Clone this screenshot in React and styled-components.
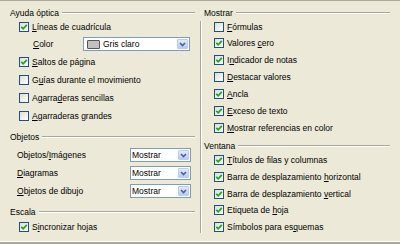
import React from "react";
import styled, { createGlobalStyle } from "styled-components";

const Global = createGlobalStyle`
  body {
    margin: 0;
    background: #ece9d8;
  }
`;

const Window = styled.div`
  width: 400px;
  height: 244px;
  box-sizing: border-box;
  display: flex;
  background: #ece9d8;
  box-shadow: inset 0 1px #aca899, inset 0 -2px #aca899, inset 0 -3px #fff;
  font-family: "Liberation Sans", Arial, sans-serif;
  font-size: 8.5px;
  color: #000;
`;

const Column = styled.div`
  width: ${p => p.$w}px;
  box-sizing: border-box;
  padding: 7px ${p => p.$pr}px 0 ${p => p.$pl}px;
  display: flex;
  flex-direction: column;
`;

const Divider = styled.div`
  margin: 21px 0 11px;
  border-left: 1px solid #aca899;
  border-right: 1px solid #fff;
`;

const Legend = styled.div`
  display: flex;
  align-items: center;
  height: 12px;
  margin-top: ${p => p.$mt || 0}px;
  white-space: nowrap;

  &::after {
    content: "";
    flex: 1;
    margin-left: 3px;
    border-top: 1px solid #aca899;
    border-bottom: 1px solid #fff;
  }
`;

const Row = styled.div`
  display: flex;
  align-items: center;
  height: ${p => p.$h}px;
  padding-left: ${p => p.$indent}px;
  margin-top: ${p => p.$mt || 0}px;
  gap: 3px;
  white-space: nowrap;
`;

const Box = styled.span`
  width: 10px;
  height: 10px;
  box-sizing: border-box;
  border: 1px solid #1c5180;
  background: linear-gradient(135deg, #dcdcd7, #fff);
  display: flex;
  align-items: center;
  justify-content: center;
  flex: none;
`;

const Label = styled.span`
  width: ${p => (p.$w ? `${p.$w}px` : "auto")};
  flex: ${p => (p.$w ? "none" : 1)};
`;

const Select = styled.div`
  width: ${p => p.$w}px;
  height: 14px;
  box-sizing: border-box;
  margin-right: ${p => p.$mr}px;
  padding-left: ${p => p.$pl}px;
  border: 1px solid #7f9db9;
  background: #fff;
  display: flex;
  align-items: center;
  flex: none;
`;

const SelectText = styled.span`
  flex: 1;
`;

const Swatch = styled.span`
  width: 13px;
  height: 9px;
  box-sizing: border-box;
  margin-right: 3px;
  border: 1px solid #555;
  border-radius: 1px;
  background: #c0c0c0;
`;

const DropButton = styled.span`
  width: 11px;
  height: 10px;
  margin-right: 1px;
  box-sizing: border-box;
  border: 1px solid #bccbf2;
  border-radius: 1px;
  background: linear-gradient(#e3ebfd, #b7caf5);
  display: flex;
  align-items: center;
  justify-content: center;
`;

const Key = styled.span`
  text-decoration: underline;
  text-underline-offset: 1px;
`;

function Mnemonic({ text }) {
  const i = text.indexOf("~");
  if (i < 0) return text;
  return (
    <>
      {text.slice(0, i)}
      <Key>{text[i + 1]}</Key>
      {text.slice(i + 2)}
    </>
  );
}

function Check({ checked }) {
  return (
    <Box>
      {checked && (
        <svg width="8" height="8" viewBox="0 0 8 8">
          <path d="M1.3 3.8 L3.2 5.8 L6.8 1.9" fill="none" stroke="#21a121" strokeWidth="1.7" />
        </svg>
      )}
    </Box>
  );
}

function CheckItem({ label, checked, h, indent, mt }) {
  return (
    <Row $h={h} $indent={indent} $mt={mt}>
      <Check checked={checked} />
      <span><Mnemonic text={label} /></span>
    </Row>
  );
}

function Dropdown({ value, w, mr, pl, swatch }) {
  return (
    <Select $w={w} $mr={mr} $pl={pl}>
      {swatch && <Swatch />}
      <SelectText>{value}</SelectText>
      <DropButton>
        <svg width="7" height="5" viewBox="0 0 7 5">
          <path d="M1 1 L3.5 3.6 L6 1" fill="none" stroke="#4d6185" strokeWidth="1.5" />
        </svg>
      </DropButton>
    </Select>
  );
}

const ayuda = [
  { label: "G~uías durante el movimiento", checked: false },
  { label: "Agarra~deras sencillas", checked: false },
  { label: "~Agarraderas grandes", checked: false },
];

const objetos = ["Objetos/~Imágenes", "~Diagramas", "~Objetos de dibujo"];

const mostrar = [
  { label: "Valores ~cero", checked: true },
  { label: "I~ndicador de notas", checked: true },
  { label: "~Destacar valores", checked: false },
  { label: "~Ancla", checked: true },
  { label: "~Exceso de texto", checked: true },
  { label: "~Mostrar referencias en color", checked: true },
];

const ventana = [
  "~Títulos de filas y columnas",
  "Barra de desplazamiento ~horizontal",
  "Barra de desplazamiento ~vertical",
  "Etiqueta de ~hoja",
  "Símbolos para es~quemas",
];

export default function App() {
  return (
    <>
      <Global />
      <Window>
        <Column $w={200} $pl={10} $pr={5}>
          <Legend>Ayuda óptica</Legend>
          <CheckItem label="~Líneas de cuadrícula" checked h={16} indent={9} />
          <Row $h={18} $indent={23}>
            <Label $w={47}><Mnemonic text="~Color" /></Label>
            <Dropdown value="Gris claro" w={107} mr={5} pl={3} swatch />
          </Row>
          <CheckItem label="~Saltos de página" checked h={18} indent={9} />
          {ayuda.map(a => (
            <CheckItem key={a.label} label={a.label} checked={a.checked} h={18} indent={9} />
          ))}

          <Legend $mt={6}>Objetos</Legend>
          {objetos.map((o, i) => (
            <Row key={o} $h={18} $indent={7} $mt={i === 0 ? 3 : 0}>
              <Label><Mnemonic text={o} /></Label>
              <Dropdown value="Mostrar" w={61} mr={4} pl={1} />
            </Row>
          ))}

          <Legend $mt={6}>Escala</Legend>
          <CheckItem label="S~incronizar hojas" checked h={18} indent={9} />
        </Column>

        <Divider />

        <Column $w={198} $pl={2} $pr={10}>
          <Legend>Mostrar</Legend>
          <CheckItem label="~Fórmulas" checked={false} h={15} indent={10} />
          {mostrar.map(m => (
            <CheckItem key={m.label} label={m.label} checked={m.checked} h={17} indent={10} />
          ))}

          <Legend $mt={4}>Ventana</Legend>
          {ventana.map(v => (
            <CheckItem key={v} label={v} checked h={16.67} indent={10} />
          ))}
        </Column>
      </Window>
    </>
  );
}
